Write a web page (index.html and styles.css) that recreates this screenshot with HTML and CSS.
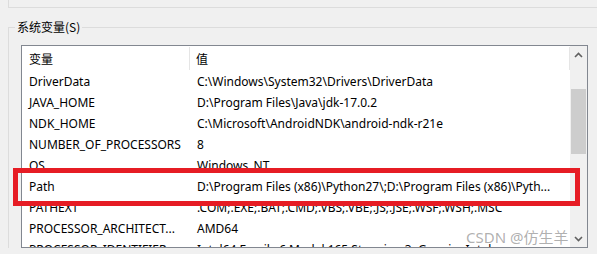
FILE: index.html
```html
<!DOCTYPE html>
<html lang="zh-CN">
<head>
    <meta charset="UTF-8">
    <meta name="viewport" content="width=device-width, initial-scale=1.0">
    <title>系统变量</title>
    <link rel="stylesheet" href="styles.css">
</head>
<body>
    <!-- 上方用户变量分组的底边 -->
    <div class="upper-group"></div>

    <fieldset class="group">
        <legend>系统变量(S)</legend>
        <div class="listview">
            <div class="list-body">
                <div class="list-row list-header">
                    <div class="cell name-col">变量</div>
                    <div class="cell value-col">值</div>
                </div>
                <div class="list-row">
                    <div class="cell name-col">DriverData</div>
                    <div class="cell value-col">C:\Windows\System32\Drivers\DriverData</div>
                </div>
                <div class="list-row">
                    <div class="cell name-col">JAVA_HOME</div>
                    <div class="cell value-col">D:\Program Files\Java\jdk-17.0.2</div>
                </div>
                <div class="list-row">
                    <div class="cell name-col">NDK_HOME</div>
                    <div class="cell value-col">C:\Microsoft\AndroidNDK\android-ndk-r21e</div>
                </div>
                <div class="list-row">
                    <div class="cell name-col">NUMBER_OF_PROCESSORS</div>
                    <div class="cell value-col">8</div>
                </div>
                <div class="list-row">
                    <div class="cell name-col">OS</div>
                    <div class="cell value-col">Windows_NT</div>
                </div>
                <div class="list-row">
                    <div class="cell name-col">Path</div>
                    <div class="cell value-col">D:\Program Files (x86)\Python27\;D:\Program Files (x86)\Pyth...</div>
                </div>
                <div class="list-row">
                    <div class="cell name-col">PATHEXT</div>
                    <div class="cell value-col">.COM;.EXE;.BAT;.CMD;.VBS;.VBE;.JS;.JSE;.WSF;.WSH;.MSC</div>
                </div>
                <div class="list-row">
                    <div class="cell name-col">PROCESSOR_ARCHITECT...</div>
                    <div class="cell value-col">AMD64</div>
                </div>
                <div class="list-row">
                    <div class="cell name-col">PROCESSOR_IDENTIFIER</div>
                    <div class="cell value-col">Intel64 Family 6 Model 165 Stepping 3, GenuineIntel</div>
                </div>
            </div>
            <div class="scrollbar">
                <div class="scroll-btn">
                    <svg width="9" height="6" viewBox="0 0 9 6"><path d="M1 5 L4.5 1.5 L8 5" fill="none" stroke="#606060" stroke-width="1.6"/></svg>
                </div>
                <div class="scroll-thumb"></div>
                <div class="scroll-btn scroll-down">
                    <svg width="9" height="6" viewBox="0 0 9 6"><path d="M1 1 L4.5 4.5 L8 1" fill="none" stroke="#606060" stroke-width="1.6"/></svg>
                </div>
            </div>
        </div>
    </fieldset>

    <!-- 红色标注框 -->
    <div class="highlight"></div>
    <div class="watermark">CSDN @仿生羊</div>
</body>
</html>
```

FILE: styles.css
```css
/* 基本样式 */
body {
    margin: 0;
    height: 254px;
    overflow: hidden;
    background-color: #f0f0f0;
    font-family: "Noto Sans", "Noto Sans CJK SC", sans-serif;
    font-size: 12px;
    color: #000;
    position: relative;
}

.upper-group {
    height: 7px;
    margin-left: 8px;
    border-left: 1px solid #dcdcdc;
    border-bottom: 1px solid #dcdcdc;
}

.group {
    margin: 11px 0 0 8px;
    padding: 10px 0 0 12px;
    border: 1px solid #dcdcdc;
    border-right: none;
    border-bottom: none;
    min-width: 0;
}

.group legend {
    margin-left: -6px;
    padding: 0 2px;
    line-height: 16px;
    font-family: "Noto Sans CJK SC", sans-serif;
}

.listview {
    display: flex;
    width: 565px;
    height: 201px;
    border: 1px solid #828790;
    background-color: #fff;
}

.list-body {
    flex: 1;
    min-width: 0;
    overflow: hidden;
}

.list-row {
    display: flex;
    height: 21px;
    line-height: 21px;
}

.list-header {
    height: 25px;
    line-height: 25px;
    font-family: "Noto Sans CJK SC", sans-serif;
}

.cell {
    box-sizing: border-box;
    white-space: nowrap;
    overflow: hidden;
    text-overflow: ellipsis;
}

.name-col {
    width: 168px;
    padding: 0 1px 0 7px;
    flex-shrink: 0;
}

.value-col {
    flex: 1;
    padding: 0 4px 0 7px;
}

.list-header .name-col,
.list-header .value-col {
    border-right: 1px solid #e5e5e5;
    margin: 1px 0;
    line-height: 23px;
}

.list-header .value-col {
    padding-left: 6px;
}

/* 滚动条 */
.scrollbar {
    width: 17px;
    flex-shrink: 0;
    display: flex;
    flex-direction: column;
    background-color: #f0f0f0;
}

.scroll-btn {
    height: 17px;
    display: flex;
    align-items: center;
    justify-content: center;
}

.scroll-thumb {
    height: 65px;
    margin: 26px 1px 0;
    background-color: #cdcdcd;
}

.scroll-down {
    margin-top: auto;
}

/* 标注 */
.highlight {
    position: absolute;
    left: 13px;
    top: 168px;
    width: 567px;
    height: 38px;
    box-sizing: border-box;
    border: 5px solid #e61c24;
}

.watermark {
    position: absolute;
    left: 466px;
    top: 227px;
    font-family: "Noto Sans", "Noto Sans CJK SC", sans-serif;
    font-size: 15px;
    line-height: 20px;
    color: rgba(150, 150, 150, 0.75);
}
```
